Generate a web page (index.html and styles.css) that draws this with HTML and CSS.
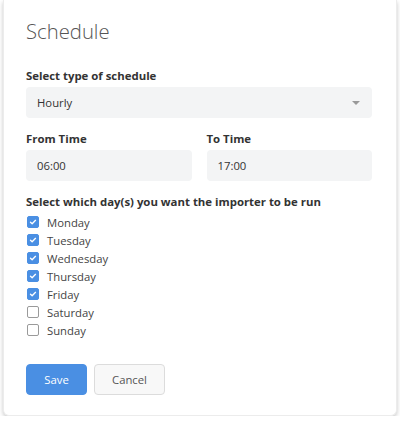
FILE: index.html
```html
<!DOCTYPE html>
<html>
<head>
<meta charset="utf-8">
<link rel="stylesheet" href="styles.css">
</head>
<body>
<div class="card">
  <h1 class="title">Schedule</h1>
  <div class="field first">
    <div class="label">Select type of schedule</div>
    <div class="select">
      <span>Hourly</span>
      <span class="caret"></span>
    </div>
  </div>
  <div class="row">
    <div class="field">
      <div class="label">From Time</div>
      <div class="input">06:00</div>
    </div>
    <div class="field">
      <div class="label">To Time</div>
      <div class="input">17:00</div>
    </div>
  </div>
  <div class="field days">
    <div class="label">Select which day(s) you want the importer to be run</div>
    <ul class="daylist">
      <li><span class="cb on"><svg viewBox="0 0 12 12" width="12" height="12"><path d="M3 6.2 L5 8.2 L9 4" fill="none" stroke="#fff" stroke-width="1.6" stroke-linecap="round" stroke-linejoin="round"/></svg></span>Monday</li>
      <li><span class="cb on"><svg viewBox="0 0 12 12" width="12" height="12"><path d="M3 6.2 L5 8.2 L9 4" fill="none" stroke="#fff" stroke-width="1.6" stroke-linecap="round" stroke-linejoin="round"/></svg></span>Tuesday</li>
      <li><span class="cb on"><svg viewBox="0 0 12 12" width="12" height="12"><path d="M3 6.2 L5 8.2 L9 4" fill="none" stroke="#fff" stroke-width="1.6" stroke-linecap="round" stroke-linejoin="round"/></svg></span>Wednesday</li>
      <li><span class="cb on"><svg viewBox="0 0 12 12" width="12" height="12"><path d="M3 6.2 L5 8.2 L9 4" fill="none" stroke="#fff" stroke-width="1.6" stroke-linecap="round" stroke-linejoin="round"/></svg></span>Thursday</li>
      <li><span class="cb on"><svg viewBox="0 0 12 12" width="12" height="12"><path d="M3 6.2 L5 8.2 L9 4" fill="none" stroke="#fff" stroke-width="1.6" stroke-linecap="round" stroke-linejoin="round"/></svg></span>Friday</li>
      <li><span class="cb"></span>Saturday</li>
      <li><span class="cb"></span>Sunday</li>
    </ul>
  </div>
  <div class="actions">
    <button class="btn primary">Save</button>
    <button class="btn">Cancel</button>
  </div>
</div>
</body>
</html>
```
FILE: styles.css
```css
html, body {
  margin: 0;
  padding: 0;
  background: #ffffff;
}
body {
  font-family: "Open Sans", "Noto Sans", sans-serif;
  color: #333;
}
.card {
  margin: 0 3px;
  height: 416px;
  box-sizing: border-box;
  padding: 17px 24px 0 22px;
  background: #fff;
  border-radius: 0 0 6px 6px;
  border: 1px solid #ececec;
  border-top: none;
  box-shadow: 0 2px 4px rgba(0,0,0,0.22);
  display: flex;
  flex-direction: column;
}
.title {
  margin: 0;
  font-size: 20.3px;
  font-weight: 300;
  line-height: 28px;
  color: #555;
}
.field {
  display: flex;
  flex-direction: column;
}
.field.first {
  margin-top: 23px;
}
.label {
  font-size: 11.4px;
  font-weight: 700;
  line-height: 16px;
  color: #333;
  margin-bottom: 3px;
}
.select, .input {
  height: 31px;
  background: #f3f4f5;
  border-radius: 4px;
  font-size: 11.3px;
  color: #333;
  padding: 0 11px;
  display: flex;
  align-items: center;
  box-sizing: border-box;
}
.select {
  justify-content: space-between;
}
.caret {
  width: 0;
  height: 0;
  border-left: 4px solid transparent;
  border-right: 4px solid transparent;
  border-top: 4px solid #999;
  margin-right: 1px;
}
.row {
  display: flex;
  gap: 15px;
  margin-top: 13px;
}
.row > .field {
  flex: 1;
}
.days {
  margin-top: 13px;
}
.days .label {
  margin-bottom: 3px;
}
.daylist {
  list-style: none;
  margin: 0;
  padding: 0;
}
.daylist li {
  display: flex;
  align-items: center;
  height: 18px;
  font-size: 11.3px;
  color: #444;
}
.cb {
  width: 12px;
  height: 12px;
  box-sizing: border-box;
  border: 1px solid #9a9a9a;
  border-radius: 2px;
  margin-left: 1px;
  margin-right: 8px;
  background: #fff;
  display: flex;
  align-items: center;
  justify-content: center;
}
.cb.on {
  background: #4a8fe3;
  border-color: #4a8fe3;
}
.cb svg {
  display: block;
}
.actions {
  display: flex;
  gap: 7px;
  margin-top: 25px;
}
.btn {
  height: 31px;
  width: 71px;
  padding: 0;
  font-family: "Open Sans", "Noto Sans", sans-serif;
  font-size: 11.3px;
  border-radius: 4px;
  border: 1px solid #dcdcdc;
  background: #f8f8f8;
  color: #555;
}
.btn.primary {
  width: 61px;
  background: #4a8fe3;
  border-color: #4a8fe3;
  color: #fff;
}
```
